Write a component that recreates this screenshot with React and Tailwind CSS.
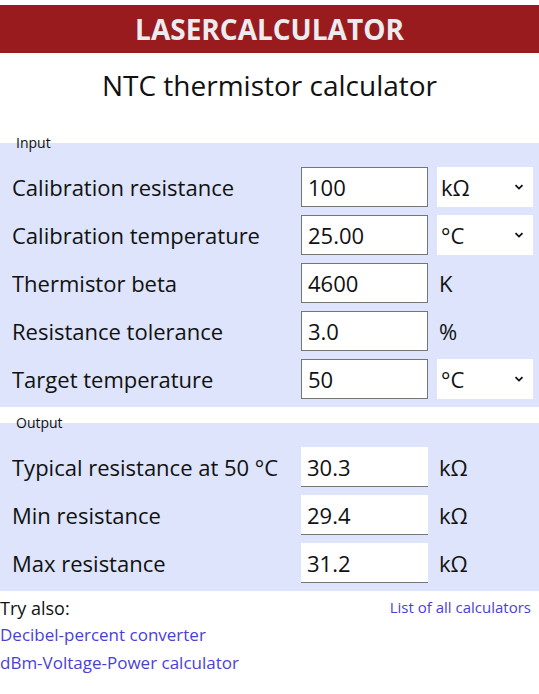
import { useState } from 'react';

const inputs = [
  { label: 'Calibration resistance', value: '100', unit: 'kΩ', select: true },
  { label: 'Calibration temperature', value: '25.00', unit: '°C', select: true },
  { label: 'Thermistor beta', value: '4600', unit: 'K' },
  { label: 'Resistance tolerance', value: '3.0', unit: '%' },
  { label: 'Target temperature', value: '50', unit: '°C', select: true },
];

const outputs = [
  { label: 'Typical resistance at 50 °C', value: '30.3', unit: 'kΩ' },
  { label: 'Min resistance', value: '29.4', unit: 'kΩ' },
  { label: 'Max resistance', value: '31.2', unit: 'kΩ' },
];

function Chevron() {
  return (
    <svg width="10" height="6" viewBox="0 0 10 6" className="shrink-0">
      <path d="M1.5 1.2 L5 4.6 L8.5 1.2" fill="none" stroke="#111" strokeWidth="1.8" />
    </svg>
  );
}

function Row({ row, output }) {
  return (
    <div className="grid grid-cols-[280px_127px_96px] gap-x-[9px] items-center h-10">
      <label className="text-[22px] text-[#111]">{row.label}</label>
      <input
        readOnly={output}
        defaultValue={row.value}
        className={`h-10 w-[127px] bg-white px-[6px] text-[22px] text-[#111] outline-none ${
          output ? 'border-b border-[#767676]' : 'border border-[#767676]'
        }`}
      />
      {row.select ? (
        <div className="h-10 bg-white flex items-center justify-between pl-[4px] pr-[9px] text-[22px] text-[#111]">
          <span>{row.unit}</span>
          <Chevron />
        </div>
      ) : (
        <span className="text-[22px] text-[#111] pl-[2px]">{row.unit}</span>
      )}
    </div>
  );
}

function Panel({ title, rows, output }) {
  return (
    <fieldset className="bg-[#dde4fb] pl-[12px] pr-0 pt-[18px] pb-[8px]">
      <legend className="pl-[4px] text-[14px] leading-[12px] text-[#111]">{title}</legend>
      <div className="flex flex-col gap-2">
        {rows.map((r) => (
          <Row key={r.label} row={r} output={output} />
        ))}
      </div>
    </fieldset>
  );
}

export default function App() {
  const [links] = useState(['Decibel-percent converter', 'dBm-Voltage-Power calculator']);

  return (
    <div className="w-[539px] min-h-[694px] bg-white font-['Open_Sans',sans-serif] pt-[5px]">
      <div className="bg-[#991b1e] h-12 flex items-center justify-center">
        <h1 className="text-[28px] font-bold text-[#ececf0] leading-none">LASERCALCULATOR</h1>
      </div>
      <h2 className="text-center text-[28px] text-[#111] leading-none mt-[18px] mb-[38px]">
        NTC thermistor calculator
      </h2>

      <Panel title="Input" rows={inputs} />
      <div className="h-[10px]" />
      <Panel title="Output" rows={outputs} output />

      <div className="flex justify-between items-start pr-[8px] pt-[4px]">
        <div className="flex flex-col">
          <span className="text-[18px] text-[#111] leading-[26px]">Try also:</span>
          {links.map((l) => (
            <a key={l} href="#" className="text-[17px] text-[#4a3fd8] leading-[28px]">
              {l}
            </a>
          ))}
        </div>
        <a href="#" className="text-[15px] text-[#4a3fd8] leading-[20px] mt-[2px]">
          List of all calculators
        </a>
      </div>
    </div>
  );
}
